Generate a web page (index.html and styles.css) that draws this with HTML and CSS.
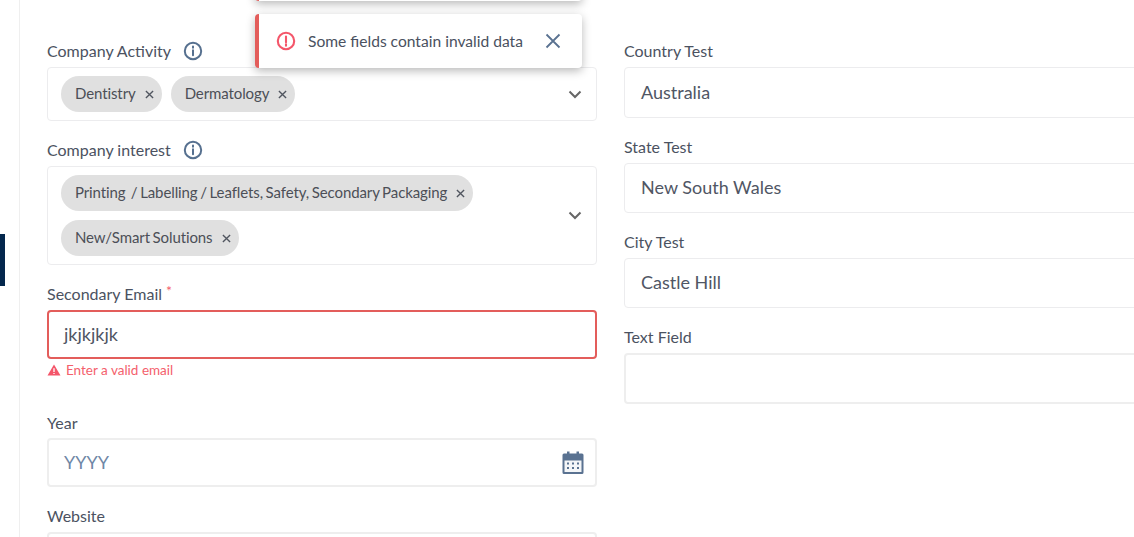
FILE: index.html
```html
<!DOCTYPE html>
<html lang="en">
<head>
<meta charset="utf-8">
<title>Company form</title>
<link rel="stylesheet" href="styles.css">
</head>
<body>
<div class="page">
  <aside class="rail"><div class="rail-mark"></div></aside>
  <main class="form">
    <div class="col">
      <div class="field">
        <div class="label">Company Activity
          <svg class="info" viewBox="0 0 20 20"><circle cx="10" cy="10" r="8.2"/><path d="M10 9.300v5M10 5.600v1.200"/></svg>
        </div>
        <div class="box select h-activity">
          <div class="chips">
            <span class="chip"><span class="chip-text">Dentistry</span><svg class="x" viewBox="0 0 10 10"><path d="M1 1l8 8M9 1l-8 8"/></svg></span>
            <span class="chip"><span class="chip-text">Dermatology</span><svg class="x" viewBox="0 0 10 10"><path d="M1 1l8 8M9 1l-8 8"/></svg></span>
          </div>
          <svg class="chev" viewBox="0 0 14 9"><path d="M1.500 1.500L7 7l5.500-5.500"/></svg>
        </div>
      </div>
      <div class="field">
        <div class="label">Company interest
          <svg class="info" viewBox="0 0 20 20"><circle cx="10" cy="10" r="8.2"/><path d="M10 9.300v5M10 5.600v1.200"/></svg>
        </div>
        <div class="box select h-interest">
          <div class="chips">
            <span class="chip"><span class="chip-text">Printing &nbsp;/ Labelling / Leaflets, Safety, Secondary Packaging</span><svg class="x" viewBox="0 0 10 10"><path d="M1 1l8 8M9 1l-8 8"/></svg></span>
            <span class="chip"><span class="chip-text">New/Smart Solutions</span><svg class="x" viewBox="0 0 10 10"><path d="M1 1l8 8M9 1l-8 8"/></svg></span>
          </div>
          <svg class="chev" viewBox="0 0 14 9"><path d="M1.500 1.500L7 7l5.500-5.500"/></svg>
        </div>
      </div>
      <div class="field">
        <div class="label">Secondary Email <span class="req">*</span></div>
        <div class="box input error">jkjkjkjk</div>
        <div class="err-msg">
          <svg class="warn" viewBox="0 0 14 12"><path class="warn-tri" d="M7 .5l6.500 11H.5z"/><path class="warn-mark" d="M7 4.300v3.600M7 9v1"/></svg>
          Enter a valid email
        </div>
      </div>
      <div class="field field-year">
        <div class="label label-tight">Year</div>
        <div class="box input thick placeholder">YYYY
          <svg class="cal" viewBox="0 0 22 24">
            <path class="cal-body" d="M5 2.500V.5h2.500v2h7V.5H17v2h3a1.500 1.500 0 0 1 1.500 1.500v17.500A1.500 1.500 0 0 1 20 23H2A1.500 1.500 0 0 1 .5 21.500V4A1.500 1.500 0 0 1 2 2.500z"/>
            <rect class="cal-page" x="2.500" y="9.500" width="17" height="11.500"/>
            <path class="cal-dots" d="M5 11.500h2v2H5zM10 11.500h2v2h-2zM15 11.500h2v2h-2zM5 16h2v2H5zM10 16h2v2h-2zM15 16h2v2h-2z"/>
          </svg>
        </div>
      </div>
      <div class="field">
        <div class="label">Website</div>
        <div class="box input thick"></div>
      </div>
    </div>
    <div class="col">
      <div class="field">
        <div class="label">Country Test</div>
        <div class="box input tall">Australia</div>
      </div>
      <div class="field">
        <div class="label">State Test</div>
        <div class="box input mid">New South Wales</div>
      </div>
      <div class="field">
        <div class="label">City Test</div>
        <div class="box input mid">Castle Hill</div>
      </div>
      <div class="field">
        <div class="label">Text Field</div>
        <div class="box input tall thick"></div>
      </div>
    </div>
  </main>
  <div class="toast toast-prev"></div>
  <div class="toast toast-main">
    <svg class="toast-icon" viewBox="0 0 20 20"><circle cx="10" cy="10" r="8.200"/><path d="M10 5.500v5.700M10 13.200v1.500"/></svg>
    <span class="toast-text">Some fields contain invalid data</span>
    <svg class="toast-close" viewBox="0 0 16 16"><path d="M1.500 1.500l13 13M14.500 1.500l-13 13"/></svg>
  </div>
</div>
</body>
</html>
```
FILE: styles.css
```css
* { box-sizing: border-box; }
html, body { margin: 0; height: 100%; overflow: hidden; background: #fff; }
body { font-family: "Lato", "Liberation Sans", sans-serif; color: #4a5160; }

.page { position: relative; display: flex; width: 1134px; height: 537px; overflow: hidden; }

.rail { flex: 0 0 20px; border-right: 1px solid #efefef; padding-top: 234px; }
.rail-mark { width: 5px; height: 52px; background: #04274d; }

.form { display: flex; gap: 27px; padding: 41px 0 0 27px; flex: none; }
.col { width: 550px; display: flex; flex-direction: column; gap: 19px; flex: none; }
.col + .col { width: 560px; }

.label { display: flex; align-items: center; gap: 4px; height: 20px; margin-bottom: 6px; font-size: 16px; line-height: 20px; color: #4b5261; white-space: nowrap; }
.label-tight { margin-bottom: 5px; }
.req { color: #f4606c; font-size: 14px; transform: translateY(-3px); }
.info { width: 20px; height: 20px; margin-left: 8px; fill: none; stroke: #56708f; stroke-width: 2; stroke-linecap: round; }

.box { background: #fff; border: 1px solid #ececee; border-radius: 4px; }
.select { display: flex; align-items: center; padding: 0 14px 0 13px; }
.h-activity { height: 54px; }
.h-interest { height: 99px; }
.chips { flex: 1; display: flex; flex-wrap: wrap; gap: 9px; }
.h-interest .chips { flex-direction: column; align-items: flex-start; }
.chip { display: inline-flex; align-items: center; gap: 9px; height: 36px; padding: 0 8px 0 14px; border-radius: 18px; background: #e0e0e0; }
.chip-text { font-size: 15px; line-height: 18px; letter-spacing: -0.1px; word-spacing: -1.100px; color: #4c4f57; white-space: pre; transform: translateY(-1px); }
.x { width: 9px; height: 9px; fill: none; stroke: #50555f; stroke-width: 1.500; }
.chev { width: 14px; height: 9px; fill: none; stroke: #666; stroke-width: 2; }

.input { display: flex; align-items: center; height: 49px; padding: 0 16px 2px; font-size: 18px; color: #505664; }
.mid { height: 50px; }
.tall { height: 51px; }
.thick { border-width: 2px; border-color: #eeeeee; padding-left: 15px; }
.error { border: 2px solid #e35d5b; padding-left: 15px; }
.placeholder { color: #6f87a6; justify-content: space-between; padding-right: 11px; }
.cal { width: 22px; height: 24px; transform: translateY(1px); }
.err-msg { display: flex; align-items: center; gap: 5px; height: 20px; margin-top: 1px; margin-bottom: 14px; font-size: 13.500px; color: #f4606c; }
.warn { width: 14px; height: 12px; }
.warn-tri { fill: #f4566a; }
.warn-mark { fill: none; stroke: #fff; stroke-width: 1.300; }
.cal-body { fill: #5a7291; }
.cal-page { fill: #f4f6f8; }
.cal-dots { fill: #5a7291; }

.toast { position: absolute; left: 255px; width: 327px; background: #fff; border-left: 4px solid #e35d5b; border-radius: 4px; box-shadow: 0 3px 10px rgba(0, 0, 0, .28); }
.toast-prev { top: -40px; height: 41px; }
.toast-main { top: 14px; height: 54px; display: flex; align-items: center; padding: 0 21px 0 17px; }
.toast-icon { width: 20px; height: 20px; fill: none; stroke: #f4566a; stroke-width: 2.100; stroke-linecap: round; }
.toast-text { margin-left: 12px; flex: 1; font-size: 15.600px; color: #4a5160; white-space: nowrap; }
.toast-close { width: 16px; height: 16px; fill: none; stroke: #5a7291; stroke-width: 1.800; }
```
